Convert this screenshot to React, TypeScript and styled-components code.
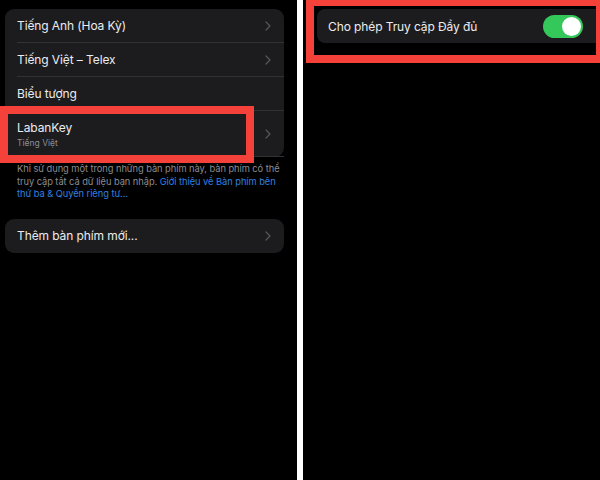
import styled, { createGlobalStyle } from "styled-components";

const GlobalStyle = createGlobalStyle`
  html, body {
    margin: 0;
    padding: 0;
    background: #000;
  }
  body {
    font-family: "Inter", "Noto Sans", "Liberation Sans", sans-serif;
    -webkit-font-smoothing: antialiased;
  }
`;

type Row = { title: string; subtitle?: string; chevron?: boolean };

const keyboards: Row[] = [
  { title: "Tiếng Anh (Hoa Kỳ)", chevron: true },
  { title: "Tiếng Việt – Telex", chevron: true },
  { title: "Biểu tượng" },
  { title: "LabanKey", subtitle: "Tiếng Việt", chevron: true },
];

function Chevron() {
  return (
    <svg width="6" height="10" viewBox="0 0 6 10" fill="none">
      <path
        d="M1 1l4 4-4 4"
        stroke="#56565b"
        strokeWidth="1.2"
        strokeLinecap="round"
        strokeLinejoin="round"
      />
    </svg>
  );
}

export default function App() {
  return (
    <>
      <GlobalStyle />
      <Screen>
        <LeftPanel>
          <Card>
            {keyboards.map((row) => (
              <Item key={row.title} $tall={!!row.subtitle}>
                <Labels>
                  <Title>{row.title}</Title>
                  {row.subtitle && <Subtitle>{row.subtitle}</Subtitle>}
                </Labels>
                {row.chevron && <Chevron />}
              </Item>
            ))}
            <Highlight $left={-5} $top={97} $width={254} $height={57} />
          </Card>
          <Footnote>
            Khi sử dụng một trong những bàn phím này, bàn phím có thể truy cập
            tất cả dữ liệu bạn nhập.{" "}
            <Link>Giới thiệu về Bàn phím bên thứ ba &amp; Quyền riêng tư...</Link>
          </Footnote>
          <Card $gap>
            <Item>
              <Labels>
                <Title>Thêm bàn phím mới...</Title>
              </Labels>
              <Chevron />
            </Item>
          </Card>
        </LeftPanel>
        <Divider />
        <RightPanel>
          <WideCard>
            <Title>Cho phép Truy cập Đầy đủ</Title>
            <Toggle>
              <Knob />
            </Toggle>
          </WideCard>
          <Highlight $left={3} $top={-2} $width={298} $height={65} />
        </RightPanel>
      </Screen>
    </>
  );
}

const Screen = styled.div`
  display: flex;
  width: 600px;
  height: 480px;
  background: #000;
  overflow: hidden;
`;

const LeftPanel = styled.div`
  width: 279px;
  padding: 9px 13px 0 5px;
  display: flex;
  flex-direction: column;
`;

const Divider = styled.div`
  width: 6px;
  background: #fff;
`;

const RightPanel = styled.div`
  position: relative;
  flex: 1;
  padding: 9px 0 0 14px;
`;

const Card = styled.div<{ $gap?: boolean }>`
  position: relative;
  background: #1c1c1e;
  border-radius: 9px;
  margin-top: ${(p) => (p.$gap ? "18px" : "0")};
`;

const Item = styled.div<{ $tall?: boolean }>`
  display: flex;
  align-items: center;
  justify-content: space-between;
  height: ${(p) => (p.$tall ? "46px" : "34px")};
  margin-left: 12px;
  padding-right: 13px;
  border-bottom: 1px solid #323235;
  box-sizing: border-box;

  &:last-of-type {
    border-bottom: none;
  }
`;

const Labels = styled.div`
  display: flex;
  flex-direction: column;
  gap: 3px;
`;

const Title = styled.span`
  color: #ececef;
  font-size: 12px;
  letter-spacing: -0.1px;
`;

const Subtitle = styled.span`
  color: #8d8d93;
  font-size: 8.5px;
`;

const Footnote = styled.p`
  margin: 6px 0 0 0;
  padding-left: 12px;
  color: #8c8c92;
  font-size: 9.3px;
  line-height: 12.5px;
  letter-spacing: -0.05px;
`;

const Link = styled.span`
  color: #2f80e0;
`;

const WideCard = styled.div`
  display: flex;
  align-items: center;
  justify-content: space-between;
  height: 34px;
  padding: 0 17px 0 11px;
  background: #1c1c1e;
  border-radius: 8px 0 0 8px;
`;

const Toggle = styled.div`
  width: 40px;
  height: 23px;
  border-radius: 12px;
  background: #34c759;
  display: flex;
  align-items: center;
  justify-content: flex-end;
  padding: 0 2px;
  box-sizing: border-box;
`;

const Knob = styled.div`
  width: 19px;
  height: 19px;
  border-radius: 50%;
  background: #fff;
`;

const Highlight = styled.div<{
  $left: number;
  $top: number;
  $width: number;
  $height: number;
}>`
  position: absolute;
  left: ${(p) => p.$left}px;
  top: ${(p) => p.$top}px;
  width: ${(p) => p.$width}px;
  height: ${(p) => p.$height}px;
  border: 8px solid #f4413a;
  box-sizing: border-box;
  pointer-events: none;
`;
